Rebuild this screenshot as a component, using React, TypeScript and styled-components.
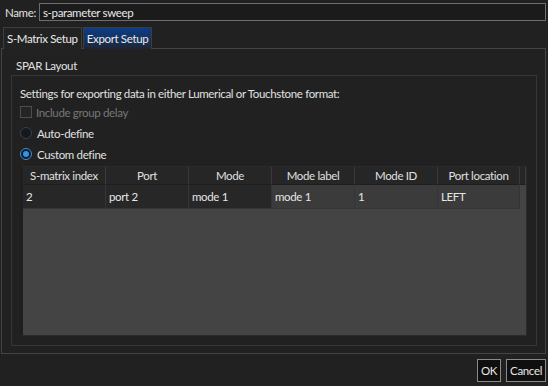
import React from 'react';
import styled, { createGlobalStyle } from 'styled-components';

const Global = createGlobalStyle`
	html, body {
		margin: 0;
		padding: 0;
		background: #212121;
	}
	* {
		box-sizing: border-box;
	}
`;

const Window = styled.div`
	width: 548px;
	height: 386px;
	display: flex;
	flex-direction: column;
	background: #212121;
	color: #e0e0e0;
	font-family: 'Lato', 'Noto Sans', sans-serif;
	font-size: 11.5px;
	letter-spacing: -0.35px;
	overflow: hidden;
`;

const NameRow = styled.div`
	display: flex;
	align-items: center;
	height: 18px;
	margin: 3px 2px 0 5px;
	gap: 3px;
`;

const NameInput = styled.div`
	flex: 1;
	height: 18px;
	display: flex;
	align-items: center;
	padding-left: 3px;
	background: #1b1b1b;
	border: 1px solid #6e6e6e;
	color: #e8e8e8;
`;

const TabBar = styled.div`
	display: flex;
	margin: 6px 0 0 3px;
	height: 22px;
	position: relative;
	z-index: 1;
`;

const Tab = styled.div<{ $active?: boolean }>`
	height: 22px;
	padding: 0 3px;
	display: flex;
	align-items: center;
	border: 1px solid #3d3d3d;
	border-bottom: none;
	margin-right: 1px;
	color: #eaeaea;
	background: ${(p) =>
		p.$active ? 'linear-gradient(180deg, #0c3c86 0%, #16325e 55%, #1e2533 100%)' : '#222222'};
`;

const Pane = styled.div`
	flex: 1;
	margin: -1px 2px 0 1px;
	border: 1px solid #444444;
	display: flex;
	flex-direction: column;
	padding: 0 8px 7px 9px;
`;

const GroupTitle = styled.div`
	height: 26px;
	padding: 6px 0 0 5px;
	display: flex;
	align-items: center;
`;

const GroupFrame = styled.div`
	flex: 1;
	border: 1px solid #363636;
	padding: 8px 9px 9px 8px;
	display: flex;
	flex-direction: column;
`;

const Line = styled.div<{ $h: number; $muted?: boolean }>`
	height: ${(p) => p.$h}px;
	display: flex;
	align-items: center;
	gap: 4px;
	color: ${(p) => (p.$muted ? '#777777' : '#e0e0e0')};
`;

const CheckBox = styled.span`
	width: 12px;
	height: 12px;
	border: 1px solid #4e4e4e;
	background: #242424;
`;

const Radio = styled.span<{ $on?: boolean }>`
	width: 12px;
	height: 12px;
	border-radius: 50%;
	border: 1px solid ${(p) => (p.$on ? '#3b8fe6' : '#2b4361')};
	background: #181818;
	display: flex;
	align-items: center;
	justify-content: center;
	margin-right: 1px;
	&::after {
		content: '';
		width: 6px;
		height: 6px;
		border-radius: 50%;
		background: ${(p) => (p.$on ? '#2c93f2' : 'transparent')};
	}
`;

const Table = styled.div`
	flex: 1;
	margin-top: 2px;
	background: #444444;
	border: 1px solid #2a2a2a;
	border-left: 3px solid #1f1f1f;
	display: flex;
	flex-direction: column;
`;

const Row = styled.div`
	display: grid;
	grid-template-columns: 83px 83px 83px 83px 83px 82px 1fr;
`;

const HeadCell = styled.div`
	height: 18px;
	display: flex;
	align-items: center;
	justify-content: center;
	background: #262626;
	border-right: 1px solid #3a3a3a;
	border-bottom: 1px solid #1e1e1e;
	color: #e0e0e0;
`;

const Cell = styled.div<{ $light?: boolean }>`
	height: 24px;
	display: flex;
	align-items: center;
	padding-left: 3px;
	background: ${(p) => (p.$light ? '#3b3b3b' : '#272727')};
	border-right: 1px solid #353535;
	border-bottom: 1px solid #353535;
	color: #e6e6e6;
`;

const Footer = styled.div`
	height: 32px;
	display: flex;
	justify-content: flex-end;
	align-items: flex-start;
	gap: 5px;
	padding: 5px 2px 0 0;
`;

const Button = styled.div`
	height: 23px;
	padding: 0 3px;
	display: flex;
	align-items: center;
	background: #0f0f0f;
	border: 1px solid #8a8a8a;
	color: #e8e8e8;
`;

const headers = ['S-matrix index', 'Port', 'Mode', 'Mode label', 'Mode ID', 'Port location'];
const row = ['2', 'port 2', 'mode 1', 'mode 1', '1', 'LEFT'];

export default function App() {
	return (
		<Window>
			<Global />
			<NameRow>
				<span>Name:</span>
				<NameInput>s-parameter sweep</NameInput>
			</NameRow>
			<TabBar>
				<Tab>S-Matrix Setup</Tab>
				<Tab $active>Export Setup</Tab>
			</TabBar>
			<Pane>
				<GroupTitle>SPAR Layout</GroupTitle>
				<GroupFrame>
					<Line $h={18}>Settings for exporting data in either Lumerical or Touchstone format:</Line>
					<Line $h={20} $muted>
						<CheckBox />
						Include group delay
					</Line>
					<Line $h={22}>
						<Radio />
						Auto-define
					</Line>
					<Line $h={20}>
						<Radio $on />
						Custom define
					</Line>
					<Table>
						<Row>
							{headers.map((h) => (
								<HeadCell key={h}>{h}</HeadCell>
							))}
							<HeadCell />
						</Row>
						<Row>
							{row.map((v, i) => (
								<Cell key={i} $light={i > 2}>
									{v}
								</Cell>
							))}
						</Row>
					</Table>
				</GroupFrame>
			</Pane>
			<Footer>
				<Button>OK</Button>
				<Button>Cancel</Button>
			</Footer>
		</Window>
	);
}
